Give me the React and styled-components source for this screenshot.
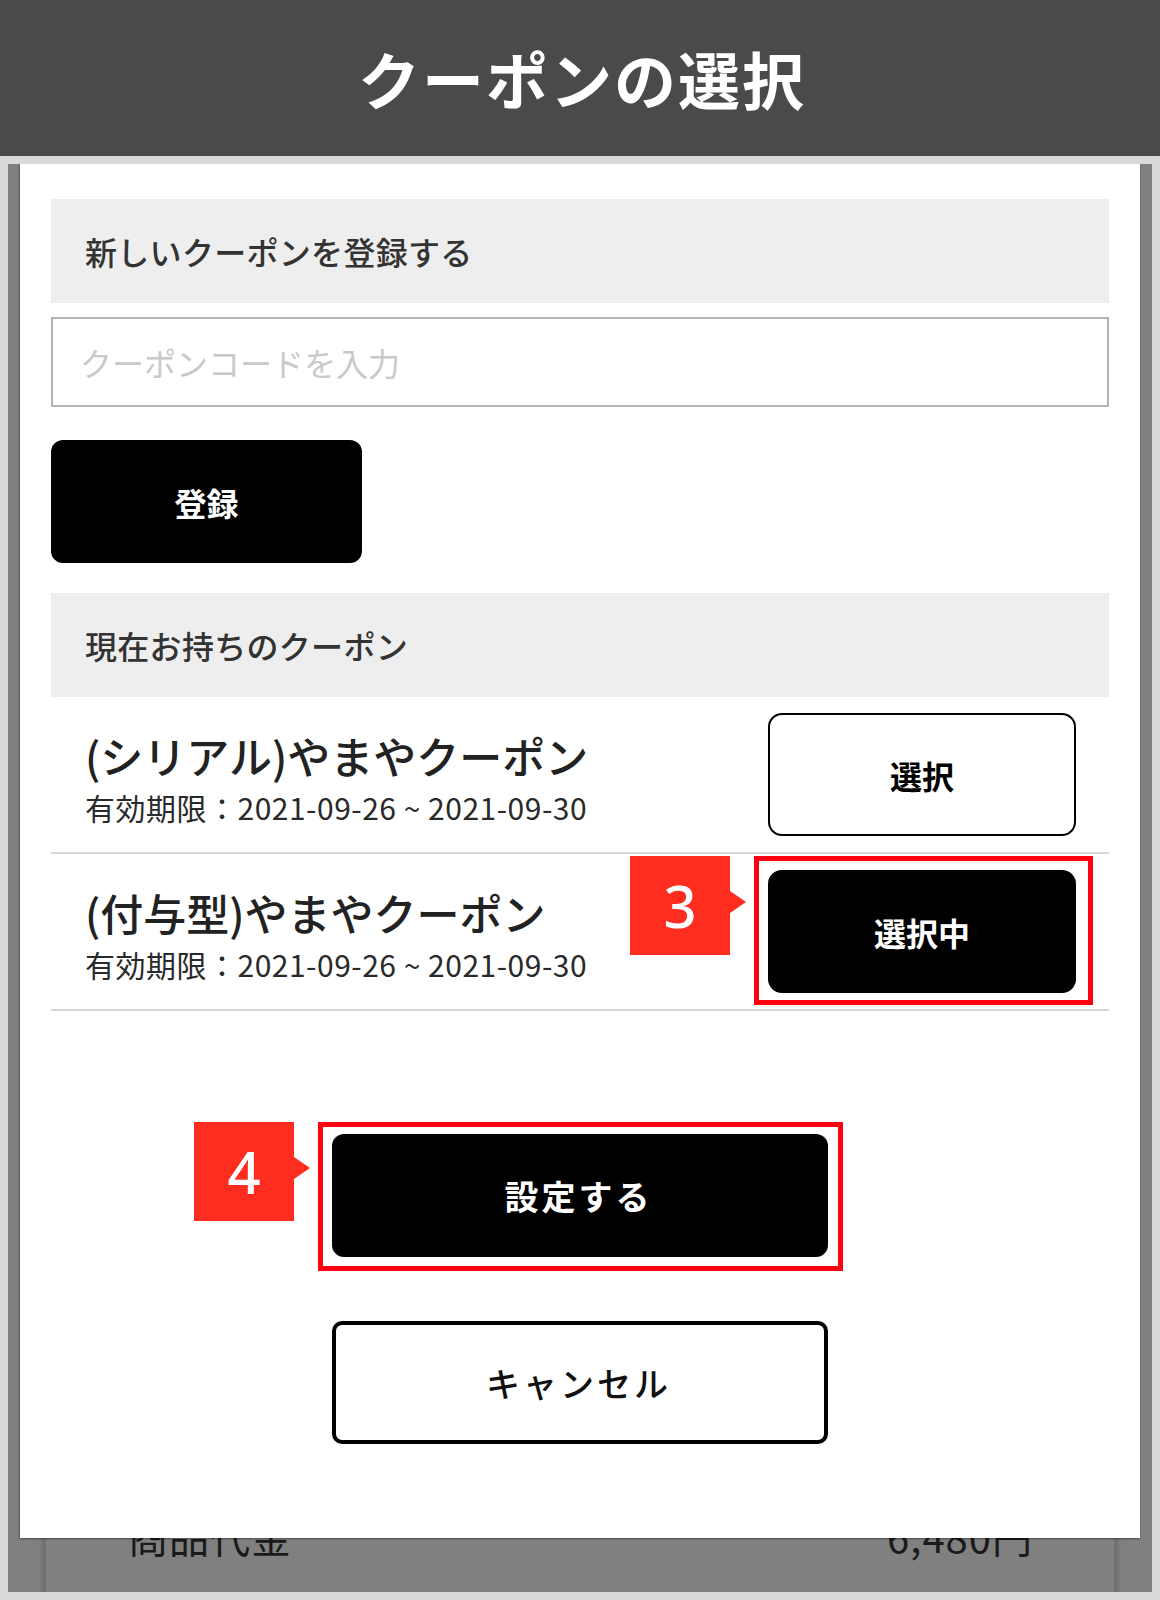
import styled, {createGlobalStyle} from 'styled-components';

const GlobalStyle = createGlobalStyle`
    html, body {
        margin: 0;
        padding: 0;
        background: #d9d9d9;
    }
    * {
        box-sizing: border-box;
    }
    body {
        font-family: "Noto Sans CJK JP", "Noto Sans", sans-serif;
        color: #222;
    }
`;

const coupons = [
    {id: 1, name: '(シリアル)やまやクーポン', period: '有効期限：2021-09-26 ~ 2021-09-30', selected: false},
    {id: 2, name: '(付与型)やまやクーポン', period: '有効期限：2021-09-26 ~ 2021-09-30', selected: true},
];

function App() {
    return (
        <Page>
            <GlobalStyle/>
            <Header>クーポンの選択</Header>
            <Stage>
                <Backdrop>
                    <BehindCard>
                        <BehindRow>
                            <span>商品代金</span>
                            <span>6,480円</span>
                        </BehindRow>
                    </BehindCard>

                    <Modal>
                        <SectionTitle>新しいクーポンを登録する</SectionTitle>
                        <CodeInput type='text' placeholder='クーポンコードを入力'/>
                        <RegisterButton>登録</RegisterButton>

                        <SectionTitle $gap={30}>現在お持ちのクーポン</SectionTitle>
                        <CouponList>
                            {coupons.map(item => (
                                <CouponRow key={item.id}>
                                    <CouponInfo>
                                        <CouponName>{item.name}</CouponName>
                                        <CouponPeriod>{item.period}</CouponPeriod>
                                    </CouponInfo>
                                    {item.selected ? (
                                        <Marked>
                                            <Badge $top={-14}>3</Badge>
                                            <Frame $top={-14} $right={-17} $bottom={-12} $left={-14}/>
                                            <SelectButton $active>選択中</SelectButton>
                                        </Marked>
                                    ) : (
                                        <SelectButton>選択</SelectButton>
                                    )}
                                </CouponRow>
                            ))}
                        </CouponList>

                        <Footer>
                            <Marked>
                                <Badge $top={-12}>4</Badge>
                                <Frame $top={-12} $right={-15} $bottom={-14} $left={-14}/>
                                <WideButton $primary>設定する</WideButton>
                            </Marked>
                            <WideButton>キャンセル</WideButton>
                        </Footer>
                    </Modal>
                </Backdrop>
            </Stage>
        </Page>
    );
}

const Page = styled.div`
    width: 1160px;
    min-height: 1600px;
    background: #d9d9d9;
`;

const Header = styled.header`
    height: 156px;
    background: #4a4a4a;
    color: #fff;
    display: flex;
    align-items: center;
    justify-content: center;
    font-size: 62px;
    font-weight: 700;
    letter-spacing: 2px;
    padding-left: 4px;
`;

const Stage = styled.div`
    padding: 8px;
`;

const Backdrop = styled.div`
    position: relative;
    height: 1428px;
    background: #808080;
    overflow: hidden;
`;

const BehindCard = styled.div`
    margin: 1300px 36px 0;
    height: 300px;
    padding: 52px 81px 0 82px;
    border-left: 2px solid #727272;
    border-right: 2px solid #727272;
    box-shadow: -2px 0 4px rgba(0, 0, 0, 0.12), 2px 0 4px rgba(0, 0, 0, 0.12);
`;

const BehindRow = styled.div`
    display: flex;
    justify-content: space-between;
    font-size: 40px;
    line-height: 40px;
    letter-spacing: 1px;
    color: #1a1a1a;
`;

const Modal = styled.div`
    position: absolute;
    top: 0;
    left: 12px;
    right: 12px;
    height: 1374px;
    background: #fff;
    padding: 35px 31px 0;
    box-shadow: 0 1px 2px rgba(0, 0, 0, 0.35), -1px 0 2px rgba(0, 0, 0, 0.25);
    display: flex;
    flex-direction: column;
`;

const SectionTitle = styled.div`
    margin-top: ${props => props.$gap || 0}px;
    height: 104px;
    background: #eeeeee;
    display: flex;
    align-items: center;
    padding-left: 34px;
    font-size: 32px;
    font-weight: 500;
    letter-spacing: 0.3px;
    color: #333;
`;

const CodeInput = styled.input`
    margin-top: 14px;
    height: 90px;
    width: 100%;
    border: 2px solid #b3b3b3;
    padding: 0 27px;
    font-family: "Noto Sans CJK JP", sans-serif;
    font-size: 32px;
    color: #333;
    outline: none;

    &::placeholder {
        color: #c9c9c9;
    }
`;

const RegisterButton = styled.button`
    margin-top: 33px;
    width: 311px;
    height: 123px;
    border: none;
    border-radius: 12px;
    background: #000;
    color: #fff;
    font-family: "Noto Sans CJK JP", sans-serif;
    font-size: 32px;
    font-weight: 700;
`;

const CouponList = styled.div`
    display: flex;
    flex-direction: column;
`;

const CouponRow = styled.div`
    display: flex;
    align-items: center;
    justify-content: space-between;
    padding: 0 33px 0 34px;
    border-bottom: 2px solid #d6d6d6;
`;

const CouponInfo = styled.div`
    padding: 32px 0 25px;
`;

const CouponName = styled.div`
    font-size: 43px;
    line-height: 52px;
    font-weight: 500;
    color: #222;
`;

const CouponPeriod = styled.div`
    margin-top: 6px;
    font-size: 30px;
    line-height: 40px;
    letter-spacing: 0.5px;
    color: #2a2a2a;
`;

const SelectButton = styled.button`
    width: 308px;
    height: 123px;
    border-radius: 14px;
    border: 2px solid #000;
    background: ${props => props.$active ? '#000' : '#fff'};
    color: ${props => props.$active ? '#fff' : '#000'};
    font-family: "Noto Sans CJK JP", sans-serif;
    font-size: 32px;
    font-weight: 700;
`;

const Marked = styled.div`
    position: relative;
    display: flex;
`;

const Frame = styled.div`
    position: absolute;
    top: ${props => props.$top}px;
    right: ${props => props.$right}px;
    bottom: ${props => props.$bottom}px;
    left: ${props => props.$left}px;
    border: 5px solid #ff0010;
    pointer-events: none;
`;

const Badge = styled.div`
    position: absolute;
    top: ${props => props.$top}px;
    left: -138px;
    width: 100px;
    height: 99px;
    background: #ff2d20;
    color: #fff;
    display: flex;
    align-items: center;
    justify-content: center;
    font-family: "Noto Sans", sans-serif;
    font-size: 58px;
    font-weight: 500;
    line-height: 1;

    &::after {
        content: '';
        position: absolute;
        left: 100px;
        top: 35px;
        border-style: solid;
        border-width: 11px 0 11px 16px;
        border-color: transparent transparent transparent #ff2d20;
    }
`;

const Footer = styled.div`
    margin-top: 123px;
    display: flex;
    flex-direction: column;
    align-items: center;
    gap: 64px;
`;

const WideButton = styled.button`
    width: 496px;
    height: 123px;
    border-radius: ${props => props.$primary ? '12px' : '10px'};
    border: ${props => props.$primary ? 'none' : '4px solid #000'};
    background: ${props => props.$primary ? '#000' : '#fff'};
    color: ${props => props.$primary ? '#fff' : '#111'};
    font-family: "Noto Sans CJK JP", sans-serif;
    font-size: 34px;
    font-weight: ${props => props.$primary ? 700 : 500};
    letter-spacing: 3px;
    padding-left: 3px;
`;

export default App;
